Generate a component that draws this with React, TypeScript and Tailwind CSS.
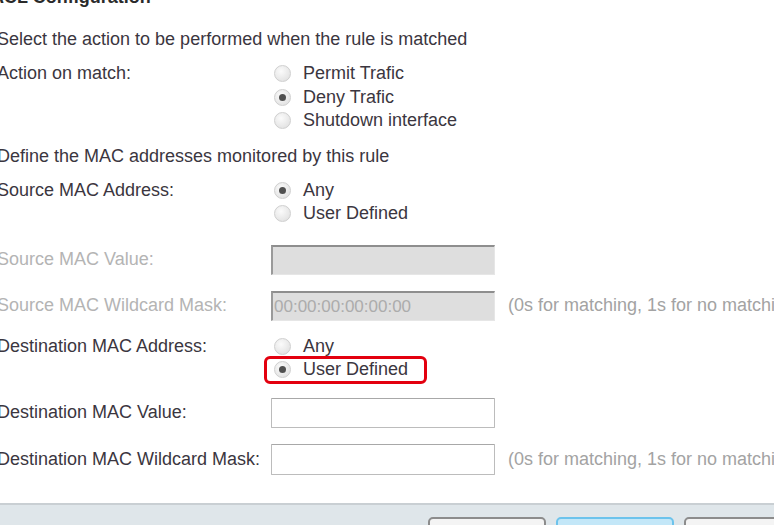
import React from "react";

function Radio({ checked }: { checked?: boolean }) {
  return (
    <span className="w-[17px] h-[17px] rounded-full border border-[#cfcfcf] bg-[radial-gradient(circle_at_40%_35%,#fbfbfb,#dcdcdc)] flex items-center justify-center shrink-0">
      {checked && <span className="w-[7px] h-[7px] rounded-full bg-[#505050]" />}
    </span>
  );
}

function RadioItem({ label, checked }: { label: string; checked?: boolean }) {
  return (
    <div className="flex items-center h-[23.5px] pl-[3px]">
      <Radio checked={checked} />
      <span className="ml-[12px] leading-[23.5px]">{label}</span>
    </div>
  );
}

function Label({ children, disabled }: { children: React.ReactNode; disabled?: boolean }) {
  return (
    <div className={`w-[274px] shrink-0 whitespace-nowrap ${disabled ? "text-[#b4b4b4]" : ""}`}>{children}</div>
  );
}

export default function App() {
  return (
    <div className="w-[774px] h-[525px] overflow-hidden bg-white flex flex-col text-[18px] text-[#3b3640] font-['Liberation_Sans',Arial,sans-serif]">
      <div className="flex-1 flex flex-col ml-[-3px] whitespace-nowrap">
        <div className="mt-[-14px] h-[22px] leading-[22px] font-bold text-[#2a2a2a] ml-[-6px]">ACL Configuration</div>
        <div className="mt-[20px] h-[22px] leading-[22px]">Select the action to be performed when the rule is matched</div>

        <div className="mt-[12px] flex">
          <Label><div className="leading-[23.5px]">Action on match:</div></Label>
          <div className="flex flex-col">
            <RadioItem label="Permit Trafic" />
            <RadioItem label="Deny Trafic" checked />
            <RadioItem label="Shutdown interface" />
          </div>
        </div>

        <div className="mt-[12px] h-[22px] leading-[22px]">Define the MAC addresses monitored by this rule</div>

        <div className="mt-[12px] flex">
          <Label><div className="leading-[23.5px]">Source MAC Address:</div></Label>
          <div className="flex flex-col">
            <RadioItem label="Any" checked />
            <RadioItem label="User Defined" />
          </div>
        </div>

        <div className="mt-[19px] flex items-center h-[30px]">
          <Label disabled>Source MAC Value:</Label>
          <div className="w-[224px] h-[30px] shrink-0 bg-[#dedede] border-t-2 border-l-2 border-b border-r border-t-[#8e8e8e] border-l-[#9a9a9a] border-b-[#e6e6e6] border-r-[#e6e6e6]" />
        </div>

        <div className="mt-[16px] flex items-center h-[30px]">
          <Label disabled>Source MAC Wildcard Mask:</Label>
          <div className="w-[224px] h-[30px] shrink-0 bg-[#dedede] border-t-2 border-l-2 border-b border-r border-t-[#8e8e8e] border-l-[#9a9a9a] border-b-[#e6e6e6] border-r-[#e6e6e6] text-[#acacac] leading-[28px] pl-[1px] text-[17px]">
            00:00:00:00:00:00
          </div>
          <span className="ml-[13px] shrink-0 text-[#a3a3a3]">(0s for matching, 1s for no matching)</span>
        </div>

        <div className="mt-[14px] flex">
          <Label><div className="leading-[23.5px]">Destination MAC Address:</div></Label>
          <div className="flex flex-col">
            <RadioItem label="Any" />
            <div className="relative">
              <RadioItem label="User Defined" checked />
              <span className="absolute left-[-7px] top-[-2px] w-[163px] h-[28px] border-[3px] border-[#e3000f] rounded-[6px]" />
            </div>
          </div>
        </div>

        <div className="mt-[16px] flex items-center h-[30px]">
          <Label>Destination MAC Value:</Label>
          <div className="w-[224px] h-[30px] shrink-0 bg-white border border-[#bcbcbc] border-t-[#a8a8a8] rounded-[1px]" />
        </div>

        <div className="mt-[16px] flex items-center h-[31px]">
          <Label>Destination MAC Wildcard Mask:</Label>
          <div className="w-[224px] h-[31px] shrink-0 bg-white border border-[#bcbcbc] border-t-[#a8a8a8] rounded-[1px]" />
          <span className="ml-[13px] shrink-0 text-[#a3a3a3]">(0s for matching, 1s for no matching)</span>
        </div>
      </div>

      <div className="h-[22px] shrink-0 border-t-2 border-[#c9cfd3] bg-[#dfe6ea] flex gap-[10px] pl-[428px] pt-[12px]">
        <div className="w-[118px] h-[30px] shrink-0 rounded-[5px] border-2 border-[#8c8c8c] bg-[#f4f4f4]" />
        <div className="w-[118px] h-[30px] shrink-0 rounded-[5px] border-2 border-[#6cc3ec] bg-[#c3e7f8]" />
        <div className="w-[118px] h-[30px] shrink-0 rounded-[5px] border-2 border-[#8c8c8c] bg-[#f4f4f4]" />
      </div>
    </div>
  );
}
